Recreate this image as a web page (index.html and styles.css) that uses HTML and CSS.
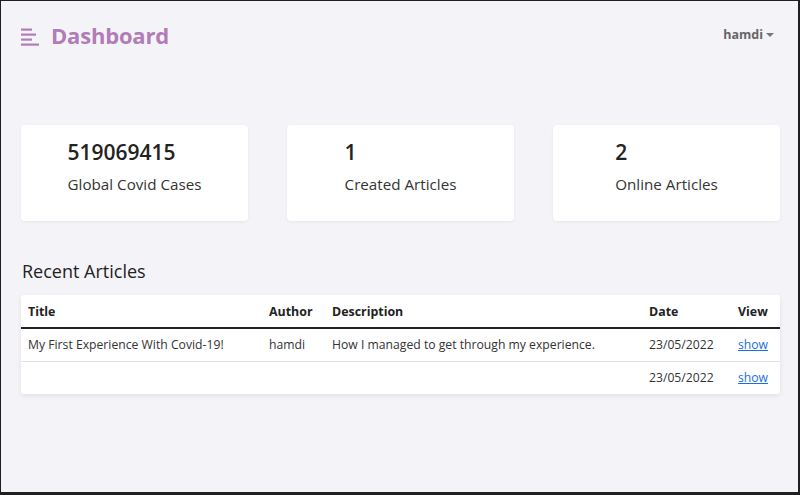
FILE: index.html
```html
<!DOCTYPE html>
<html>
<head>
<meta charset="utf-8">
<link rel="stylesheet" href="styles.css">
</head>
<body>
<div class="frame">
  <header class="topbar">
    <div class="brand">
      <svg class="menu-icon" width="20" height="18" viewBox="0 0 20 18">
        <rect x="0" y="0.5" width="11" height="2.2" fill="#b27cb7"/>
        <rect x="0" y="5.5" width="15" height="2.2" fill="#b27cb7"/>
        <rect x="0" y="10.5" width="11" height="2.2" fill="#b27cb7"/>
        <rect x="0" y="15.5" width="18" height="2.2" fill="#b27cb7"/>
      </svg>
      <span class="title">Dashboard</span>
    </div>
    <div class="user">hamdi <span class="caret"></span></div>
  </header>

  <section class="cards">
    <div class="card">
      <div class="card-body">
        <div class="num">519069415</div>
        <div class="label">Global Covid Cases</div>
      </div>
    </div>
    <div class="card">
      <div class="card-body">
        <div class="num">1</div>
        <div class="label">Created Articles</div>
      </div>
    </div>
    <div class="card">
      <div class="card-body">
        <div class="num">2</div>
        <div class="label">Online Articles</div>
      </div>
    </div>
  </section>

  <h2 class="section-title">Recent Articles</h2>

  <div class="table-card">
    <table class="articles">
      <colgroup>
        <col class="c-title"><col class="c-author"><col class="c-desc"><col class="c-date"><col class="c-view">
      </colgroup>
      <thead>
        <tr><th>Title</th><th>Author</th><th>Description</th><th>Date</th><th>View</th></tr>
      </thead>
      <tbody>
        <tr><td>My First Experience With Covid-19!</td><td>hamdi</td><td>How I managed to get through my experience.</td><td>23/05/2022</td><td><a href="#">show</a></td></tr>
        <tr><td></td><td></td><td></td><td>23/05/2022</td><td><a href="#">show</a></td></tr>
      </tbody>
    </table>
  </div>
</div>
</body>
</html>
```
FILE: styles.css
```css
html, body {
  margin: 0;
  padding: 0;
  height: 100%;
}
body {
  background: #1f1f1f;
  font-family: "Open Sans", "Noto Sans", sans-serif;
  color: #212529;
}
.frame {
  box-sizing: border-box;
  margin: 1px 2px 0 1px;
  height: 491px;
  background: #f4f4f8;
  padding: 0 18px 0 20px;
  overflow: hidden;
}
.topbar {
  display: flex;
  justify-content: space-between;
  align-items: center;
  height: 70px;
}
.brand {
  display: flex;
  align-items: center;
  gap: 10px;
}
.menu-icon { display: block; margin-top: 1px; }
.title {
  font-size: 22px;
  font-weight: 700;
  color: #b27cb7;
  letter-spacing: -0.2px;
  margin-top: -2px;
}
.user {
  font-size: 12.5px;
  font-weight: 700;
  color: #666;
  display: flex;
  align-items: center;
  gap: 3px;
  margin-right: 6px;
  margin-top: -3px;
}
.caret {
  width: 0;
  height: 0;
  border-left: 4px solid transparent;
  border-right: 4px solid transparent;
  border-top: 4px solid #777;
}
.cards {
  display: grid;
  grid-template-columns: repeat(3, 227px);
  justify-content: space-between;
  margin-top: 54px;
}
.card {
  background: #fff;
  border-radius: 4px;
  height: 96px;
  box-sizing: border-box;
  padding-top: 13px;
  display: flex;
  justify-content: center;
  align-items: flex-start;
  box-shadow: 0 1px 3px rgba(0,0,0,0.06);
}
.num {
  font-size: 21px;
  font-weight: 600;
  color: #222;
  line-height: 28px;
}
.label {
  font-size: 15.2px;
  color: #333;
  margin-top: 6px;
  line-height: 24px;
}
.section-title {
  font-size: 18px;
  font-weight: 500;
  margin: 38px 0 0 1px;
  line-height: 24px;
  color: #222;
}
.table-card {
  margin-top: 12px;
  background: #fff;
  border-radius: 3px;
  box-shadow: 0 2px 5px rgba(0,0,0,0.08);
}
.articles {
  width: 100%;
  border-collapse: collapse;
  table-layout: fixed;
  font-size: 12.2px;
}
.c-title { width: 241px; }
.c-author { width: 63px; }
.c-desc { width: 317px; }
.c-date { width: 89px; }
.c-view { width: auto; }
.articles th {
  text-align: left;
  font-weight: 700;
  padding: 1px 7px 0;
  height: 31px;
  border-bottom: 2px solid #222;
  color: #222;
  font-size: 12.4px;
}
.articles td {
  padding: 0 7px 2px;
  height: 30px;
  color: #333;
  white-space: nowrap;
}
.articles tbody tr:first-child td { border-bottom: 1px solid #e3e3e6; }
.articles a { color: #1a6fe0; }
```
